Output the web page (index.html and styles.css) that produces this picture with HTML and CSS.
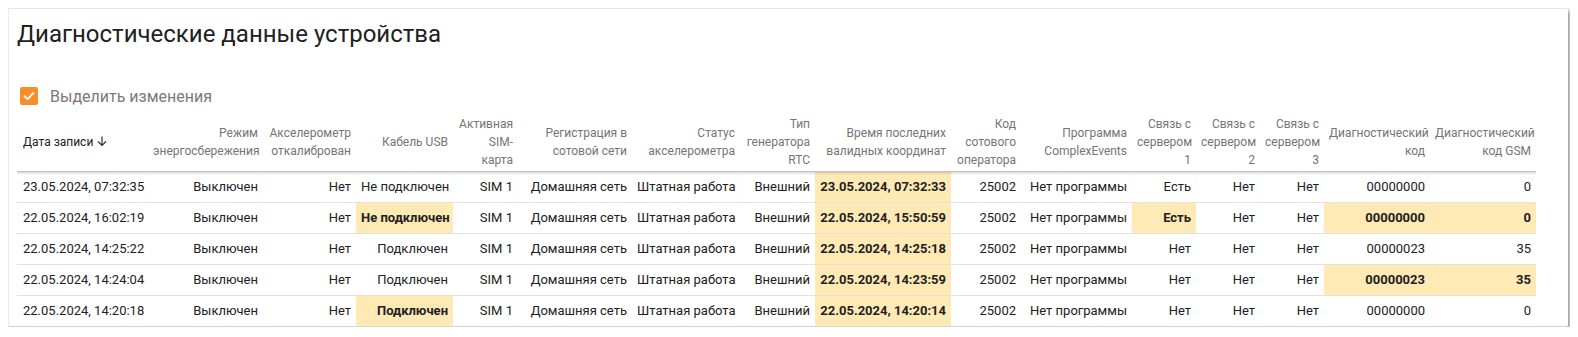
FILE: index.html
```html
<!DOCTYPE html>
<html>
    <head>
        <title>Диагностические данные устройства</title>
        <link rel="stylesheet" href="styles.css">
    </head>
    <body>
        <div class="card">
            <h1 class="card-title">Диагностические данные устройства</h1>
            <label class="check-row">
                <span class="check-box">
                    <svg width="14" height="14" viewBox="0 0 14 14"><path d="M2.5 7.2 L5.6 10.2 L11.5 3.8" fill="none" stroke="#fff" stroke-width="1.8" stroke-linecap="round" stroke-linejoin="round"/></svg>
                </span>
                <span class="check-label">Выделить изменения</span>
            </label>
            <table class="diag">
                <colgroup>
                    <col class="w131"><col class="w115"><col class="w93"><col class="w97">
                    <col class="w65"><col class="w114"><col class="w108"><col class="w75">
                    <col class="w136"><col class="w70"><col class="w111"><col class="w64">
                    <col class="w64"><col class="w64"><col class="w106"><col class="w106">
                </colgroup>
                <thead>
                    <tr>
                        <th class="sorted">Дата записи <svg class="sort-arrow" width="12" height="12" viewBox="0 0 12 12"><path d="M6 1.5 V10.5 M2 6.5 L6 10.5 L10 6.5" fill="none" stroke="#333" stroke-width="1.2"/></svg></th>
                        <th>Режим энергосбережения</th>
                        <th>Акселерометр откалиброван</th>
                        <th>Кабель USB</th>
                        <th>Активная SIM-карта</th>
                        <th>Регистрация в сотовой сети</th>
                        <th>Статус акселерометра</th>
                        <th>Тип генератора RTC</th>
                        <th>Время последних валидных координат</th>
                        <th>Код сотового оператора</th>
                        <th>Программа ComplexEvents</th>
                        <th>Связь с сервером 1</th>
                        <th>Связь с сервером 2</th>
                        <th>Связь с сервером 3</th>
                        <th>Диагностический код</th>
                        <th>Диагностический код GSM</th>
                    </tr>
                </thead>
                <tbody>
                    <tr>
                        <td>23.05.2024, 07:32:35</td>
                        <td>Выключен</td>
                        <td>Нет</td>
                        <td>Не подключен</td>
                        <td>SIM 1</td>
                        <td>Домашняя сеть</td>
                        <td>Штатная работа</td>
                        <td>Внешний</td>
                        <td class="changed">23.05.2024, 07:32:33</td>
                        <td>25002</td>
                        <td>Нет программы</td>
                        <td>Есть</td>
                        <td>Нет</td>
                        <td>Нет</td>
                        <td>00000000</td>
                        <td>0</td>
                    </tr>
                    <tr>
                        <td>22.05.2024, 16:02:19</td>
                        <td>Выключен</td>
                        <td>Нет</td>
                        <td class="changed">Не подключен</td>
                        <td>SIM 1</td>
                        <td>Домашняя сеть</td>
                        <td>Штатная работа</td>
                        <td>Внешний</td>
                        <td class="changed">22.05.2024, 15:50:59</td>
                        <td>25002</td>
                        <td>Нет программы</td>
                        <td class="changed">Есть</td>
                        <td>Нет</td>
                        <td>Нет</td>
                        <td class="changed">00000000</td>
                        <td class="changed">0</td>
                    </tr>
                    <tr>
                        <td>22.05.2024, 14:25:22</td>
                        <td>Выключен</td>
                        <td>Нет</td>
                        <td>Подключен</td>
                        <td>SIM 1</td>
                        <td>Домашняя сеть</td>
                        <td>Штатная работа</td>
                        <td>Внешний</td>
                        <td class="changed">22.05.2024, 14:25:18</td>
                        <td>25002</td>
                        <td>Нет программы</td>
                        <td>Нет</td>
                        <td>Нет</td>
                        <td>Нет</td>
                        <td>00000023</td>
                        <td>35</td>
                    </tr>
                    <tr>
                        <td>22.05.2024, 14:24:04</td>
                        <td>Выключен</td>
                        <td>Нет</td>
                        <td>Подключен</td>
                        <td>SIM 1</td>
                        <td>Домашняя сеть</td>
                        <td>Штатная работа</td>
                        <td>Внешний</td>
                        <td class="changed">22.05.2024, 14:23:59</td>
                        <td>25002</td>
                        <td>Нет программы</td>
                        <td>Нет</td>
                        <td>Нет</td>
                        <td>Нет</td>
                        <td class="changed">00000023</td>
                        <td class="changed">35</td>
                    </tr>
                    <tr>
                        <td>22.05.2024, 14:20:18</td>
                        <td>Выключен</td>
                        <td>Нет</td>
                        <td class="changed">Подключен</td>
                        <td>SIM 1</td>
                        <td>Домашняя сеть</td>
                        <td>Штатная работа</td>
                        <td>Внешний</td>
                        <td class="changed">22.05.2024, 14:20:14</td>
                        <td>25002</td>
                        <td>Нет программы</td>
                        <td>Нет</td>
                        <td>Нет</td>
                        <td>Нет</td>
                        <td>00000000</td>
                        <td>0</td>
                    </tr>
                </tbody>
            </table>
        </div>
    </body>
</html>
```

FILE: styles.css
```css
body {
    margin: 8px;
    font-family: Roboto, "Liberation Sans", sans-serif;
    background-color: #fff;
    color: #212121;
}

.card {
    width: 1560px;
    background-color: #fff;
    border-radius: 2px;
    border-top: 1px solid #e6e6e6;
    border-left: 1px solid #ececec;
    border-bottom: 1px solid #d4d4d4;
    box-shadow: 0 1px 4px rgba(0, 0, 0, 0.3), 3px 3px 4px rgba(0, 0, 0, 0.28);
    padding: 9px 0 0 8px;
    box-sizing: border-box;
}

.card-title {
    margin: 0;
    font-size: 24px;
    font-weight: 400;
    line-height: 32px;
    color: #212121;
}

.check-row {
    display: flex;
    align-items: center;
    gap: 12px;
    margin: 37px 0 0 3px;
    height: 18px;
}

.check-box {
    width: 18px;
    height: 18px;
    border-radius: 2px;
    background-color: #f88d2a;
    display: flex;
    align-items: center;
    justify-content: center;
}

.check-label {
    font-size: 16px;
    color: #7a7a7a;
}

.diag {
    margin-top: 9px;
    width: 1519px;
    table-layout: fixed;
    border-collapse: collapse;
}

.diag th {
    font-size: 12px;
    font-weight: 400;
    line-height: 18px;
    color: #757575;
    text-align: right;
    vertical-align: middle;
    padding: 1px 5px 2px 5px;
    border-bottom: 1px solid #c4c4c4;
}

.diag th.sorted {
    text-align: left;
    color: #212121;
    padding-left: 6px;
}

.sort-arrow {
    vertical-align: -1px;
    margin-left: 0;
}

.diag td {
    font-size: 13px;
    line-height: 20px;
    padding: 5px 5px;
    text-align: right;
    white-space: nowrap;
    border-bottom: 1px solid #e2e2e2;
}

.diag tbody tr:first-child td {
    box-shadow: inset 0 3px 3px -2px rgba(0, 0, 0, 0.2);
}

.diag td:first-child {
    text-align: left;
    padding-left: 6px;
}

.diag tbody tr:last-child td {
    border-bottom: none;
}

.diag td.changed {
    background-color: #ffeab6;
    font-weight: 700;
}

.w131 { width: 131px; }
.w115 { width: 115px; }
.w93 { width: 93px; }
.w97 { width: 97px; }
.w65 { width: 65px; }
.w114 { width: 114px; }
.w108 { width: 108px; }
.w75 { width: 75px; }
.w136 { width: 136px; }
.w70 { width: 70px; }
.w111 { width: 111px; }
.w64 { width: 64px; }
.w106 { width: 106px; }
```
